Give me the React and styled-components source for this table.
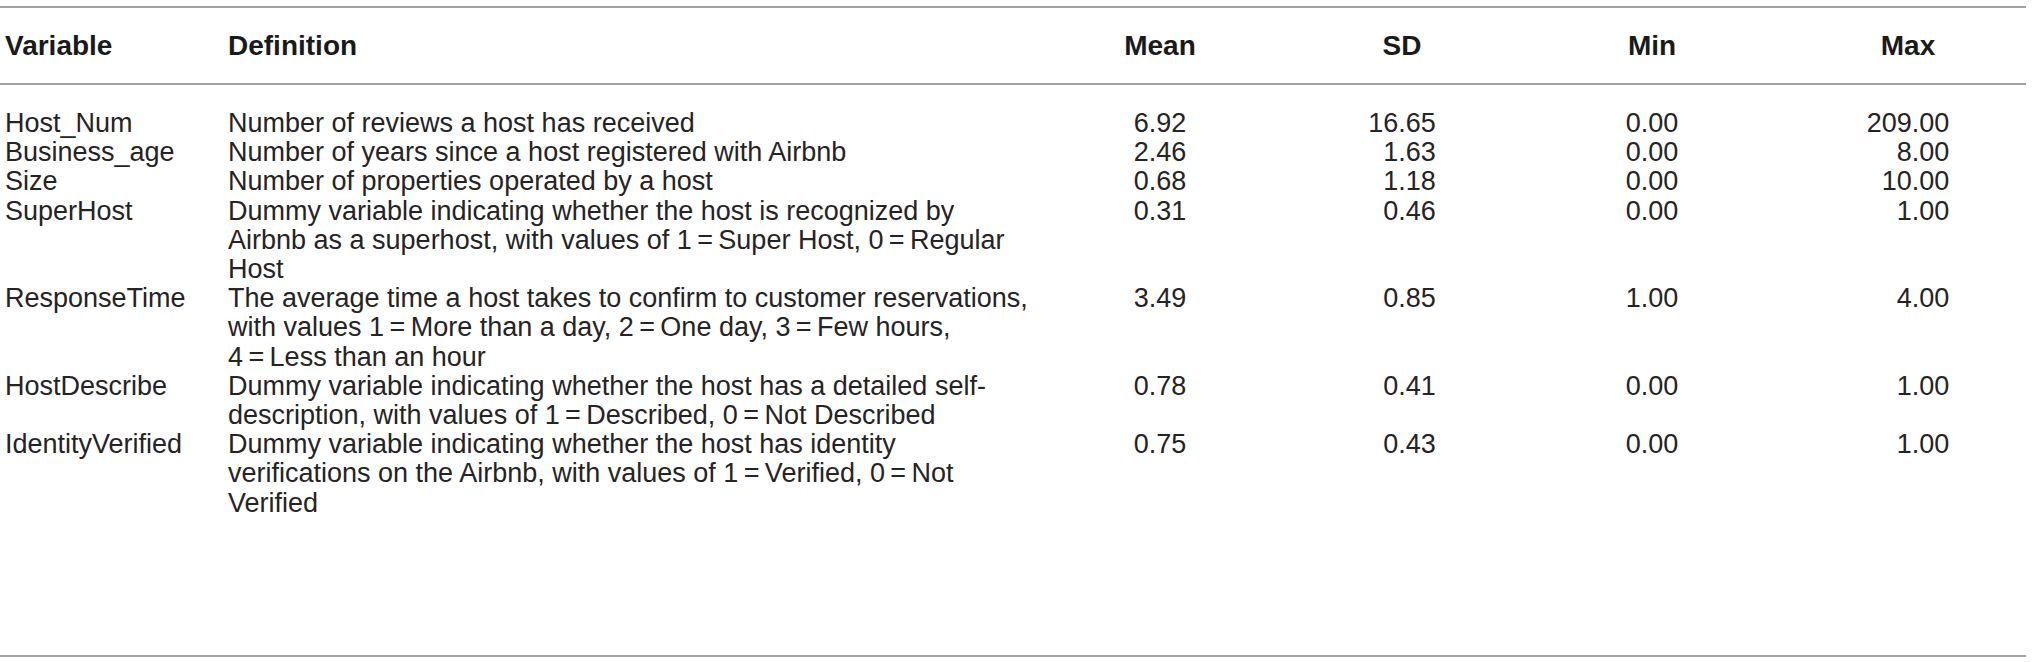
import React from "react";
import styled, { createGlobalStyle } from "styled-components";

const GlobalStyle = createGlobalStyle`
  html, body {
    margin: 0;
    padding: 0;
    background: #ffffff;
  }
  body {
    font-family: "Liberation Sans", Arial, sans-serif;
    color: #262324;
  }
`;

const T = "\u2009";

const rows = [
  { name: "Host_Num", def: ["Number of reviews a host has received"], vals: ["6.92", "16.65", "0.00", "209.00"] },
  { name: "Business_age", def: ["Number of years since a host registered with Airbnb"], vals: ["2.46", "1.63", "0.00", "8.00"] },
  { name: "Size", def: ["Number of properties operated by a host"], vals: ["0.68", "1.18", "0.00", "10.00"] },
  {
    name: "SuperHost",
    def: [
      "Dummy variable indicating whether the host is recognized by",
      `Airbnb as a superhost, with values of 1${T}=${T}Super Host, 0${T}=${T}Regular`,
      "Host",
    ],
    vals: ["0.31", "0.46", "0.00", "1.00"],
  },
  {
    name: "ResponseTime",
    def: [
      "The average time a host takes to confirm to customer reservations,",
      `with values 1${T}=${T}More than a day, 2${T}=${T}One day, 3${T}=${T}Few hours,`,
      `4${T}=${T}Less than an hour`,
    ],
    vals: ["3.49", "0.85", "1.00", "4.00"],
  },
  {
    name: "HostDescribe",
    def: [
      "Dummy variable indicating whether the host has a detailed self-",
      `description, with values of 1${T}=${T}Described, 0${T}=${T}Not Described`,
    ],
    vals: ["0.78", "0.41", "0.00", "1.00"],
  },
  {
    name: "IdentityVerified",
    def: [
      "Dummy variable indicating whether the host has identity",
      `verifications on the Airbnb, with values of 1${T}=${T}Verified, 0${T}=${T}Not`,
      "Verified",
    ],
    vals: ["0.75", "0.43", "0.00", "1.00"],
  },
];

// widest value in each numeric column, in ch (digits are 1ch, the point half)
const numCols = [
  { label: "Mean", w: 3.5 },
  { label: "SD", w: 4.5 },
  { label: "Min", w: 3.5 },
  { label: "Max", w: 5.5 },
];

const Page = styled.div`
  padding-top: 6px;
  width: 2026px;
`;

const Table = styled.div`
  border-top: 2px solid #a2a2a2;
  border-bottom: 2px solid #a2a2a2;
  padding-bottom: 137px;
`;

const Row = styled.div`
  display: grid;
  grid-template-columns: 223px 802px 260px 224px 276px 236px;
  padding-left: 5px;
`;

const HeadRow = styled(Row)`
  border-bottom: 2px solid #a2a2a2;
  margin-bottom: 24px;
`;

const HeadCell = styled.div`
  font-size: 28px;
  font-weight: 700;
  line-height: 75px;
  color: #1a1a1a;
  text-align: ${(p) => (p.$center ? "center" : "left")};
`;

const Cell = styled.div`
  font-size: 27px;
  line-height: 29.2px;
  white-space: nowrap;
`;

const NumCell = styled(Cell)`
  text-align: center;
`;

const Num = styled.span`
  display: inline-block;
  min-width: ${(p) => p.$w}ch;
  text-align: right;
`;

const Line = styled.span`
  display: block;
`;

export default function App() {
  return (
    <Page>
      <GlobalStyle />
      <Table>
        <HeadRow>
          <HeadCell>Variable</HeadCell>
          <HeadCell>Definition</HeadCell>
          {numCols.map((c) => (
            <HeadCell key={c.label} $center>
              {c.label}
            </HeadCell>
          ))}
        </HeadRow>
        {rows.map((r) => (
          <Row key={r.name}>
            <Cell>{r.name}</Cell>
            <Cell>
              {r.def.map((l, i) => (
                <Line key={i}>{l}</Line>
              ))}
            </Cell>
            {r.vals.map((v, i) => (
              <NumCell key={i}>
                <Num $w={numCols[i].w}>{v}</Num>
              </NumCell>
            ))}
          </Row>
        ))}
      </Table>
    </Page>
  );
}
